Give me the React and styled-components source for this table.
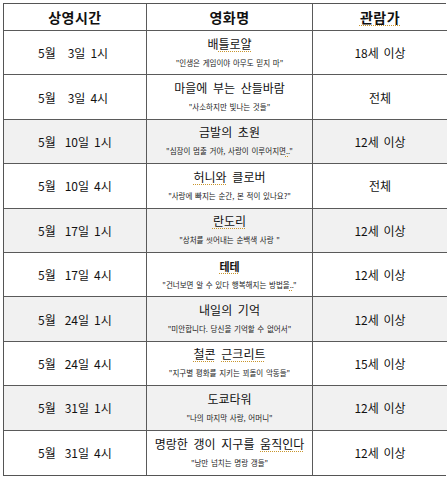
import React from 'react';
import styled, { createGlobalStyle, css } from 'styled-components';

const GlobalStyle = createGlobalStyle`
  html, body {
    margin: 0;
    padding: 0;
    background: #ffffff;
  }
  body {
    font-family: 'Noto Sans CJK KR', 'Noto Sans', sans-serif;
    color: #111;
  }
`;

const Page = styled.div`
  width: 448px;
  height: 480px;
  padding: 3px 2px 0 3px;
  box-sizing: border-box;
`;

const Table = styled.div`
  width: 443px;
  display: grid;
  grid-template-columns: 143px 166px 134px;
  border: 1.5px solid #555;
  box-sizing: border-box;
`;

const Cell = styled.div`
  display: flex;
  align-items: center;
  justify-content: center;
  box-sizing: border-box;
  border-bottom: 1px solid #5a5a5a;
  border-right: 1px solid #5a5a5a;
  background: ${props => props.shade ? '#f1f1f1' : '#ffffff'};

  ${props => props.last && css`
    border-right: 0;
  `}
  ${props => props.bottom && css`
    border-bottom: 0;
  `}
`;

const HeadCell = styled(Cell)`
  height: 27px;
  font-size: 14px;
  font-weight: 700;
  letter-spacing: 0.5px;
`;

const BodyCell = styled(Cell)`
  height: 44.4px;
  font-size: 12px;
  word-spacing: 2px;
`;

const DateCell = styled(BodyCell)`
  justify-content: flex-start;
  padding-left: 34px;
  white-space: pre;
  word-spacing: 0;
`;

const Month = styled.span`
  margin-right: ${props => props.wide ? '12px' : '9px'};
`;

const Hour = styled.span`
  margin-left: 5px;
`;

const MovieCell = styled(BodyCell)`
  flex-direction: column;
  gap: 5px;
  padding-bottom: 2px;
`;

const Title = styled.div`
  font-size: ${props => props.bold ? '11px' : '12px'};
  font-weight: ${props => props.bold ? 700 : 400};
  line-height: 16px;
  white-space: pre;
  word-spacing: 3px;
`;

const Tagline = styled.div`
  font-size: 7.5px;
  line-height: 11px;
  white-space: pre;
  word-spacing: 1px;
  color: #222;
`;

const Marked = styled.span`
  text-decoration: underline dotted #c9962c;
  text-decoration-thickness: 1px;
  text-underline-offset: 2px;
`;

const rows = [
  { month: '5월', day: '3일', hour: '1시', title: '배[틀로얄]', tag: '"인생은 게임이야 아무도 믿지 마"', age: '18세 이상' },
  { month: '5월', day: '3일', hour: '4시', title: '마을에 부는 산들바람', tag: '"사소하지만 빛나는 것들"', age: '전체' },
  { month: '5월', day: '10일', hour: '1시', title: '금발의 초원', tag: '"심장이 멈출 거야, 사랑이 이루어지면[..]"', age: '12세 이상' },
  { month: '5월', day: '10일', hour: '4시', title: '[허니와] 클로버', tag: '"사랑에 빠지는 순간, 본 적이 있나요?"', age: '전체' },
  { month: '5월', day: '17일', hour: '1시', title: '[란도리]', tag: '"상처를 씻어내는 순백색 사랑 "', age: '12세 이상' },
  { month: '5월', day: '17일', hour: '4시', title: '[테테]', tag: '"건너보면 알 수 있다 행복해지는 방법을[..]"', age: '12세 이상', bold: true },
  { month: '5월', day: '24일', hour: '1시', title: '내일의 기억', tag: '"미안합니다. 당신을 기억할 수 없어서"', age: '12세 이상' },
  { month: '5월', day: '24일', hour: '4시', title: '[철콘] [근크리트]', tag: '"지구별 평화를 지키는 꾀돌이 악동들"', age: '15세 이상' },
  { month: '5월', day: '31일', hour: '1시', title: '도쿄타워', tag: '"나의 마지막 사랑, 어머니"', age: '12세 이상' },
  { month: '5월', day: '31일', hour: '4시', title: '명랑한 갱이 지구를 [움직인다]', tag: '"낭만 넘치는 명랑 갱들"', age: '12세 이상' },
];

// text in [brackets] gets the spell-check squiggle
function withMarks(text) {
  return text.split(/(\[[^\]]+\])/).filter(Boolean).map((part, i) =>
    part.startsWith('[')
      ? <Marked key={i}>{part.slice(1, -1)}</Marked>
      : <React.Fragment key={i}>{part}</React.Fragment>
  );
}

function App() {
  return (
    <Page>
      <GlobalStyle />
      <Table>
        <HeadCell>상영시간</HeadCell>
        <HeadCell>영화명</HeadCell>
        <HeadCell last><Marked>관람가</Marked></HeadCell>

        {rows.map((row, i) => {
          const shade = i % 2 === 0 && i > 0;
          const bottom = i === rows.length - 1;
          return (
            <React.Fragment key={i}>
              <DateCell shade={shade} bottom={bottom}>
                <Month wide={row.day.length < 3}>{row.month}</Month>
                {row.day}
                <Hour>{row.hour}</Hour>
              </DateCell>
              <MovieCell shade={shade} bottom={bottom}>
                <Title bold={row.bold}>{withMarks(row.title)}</Title>
                <Tagline>{withMarks(row.tag)}</Tagline>
              </MovieCell>
              <BodyCell shade={shade} bottom={bottom} last>{row.age}</BodyCell>
            </React.Fragment>
          );
        })}
      </Table>
    </Page>
  );
}

export default App;
